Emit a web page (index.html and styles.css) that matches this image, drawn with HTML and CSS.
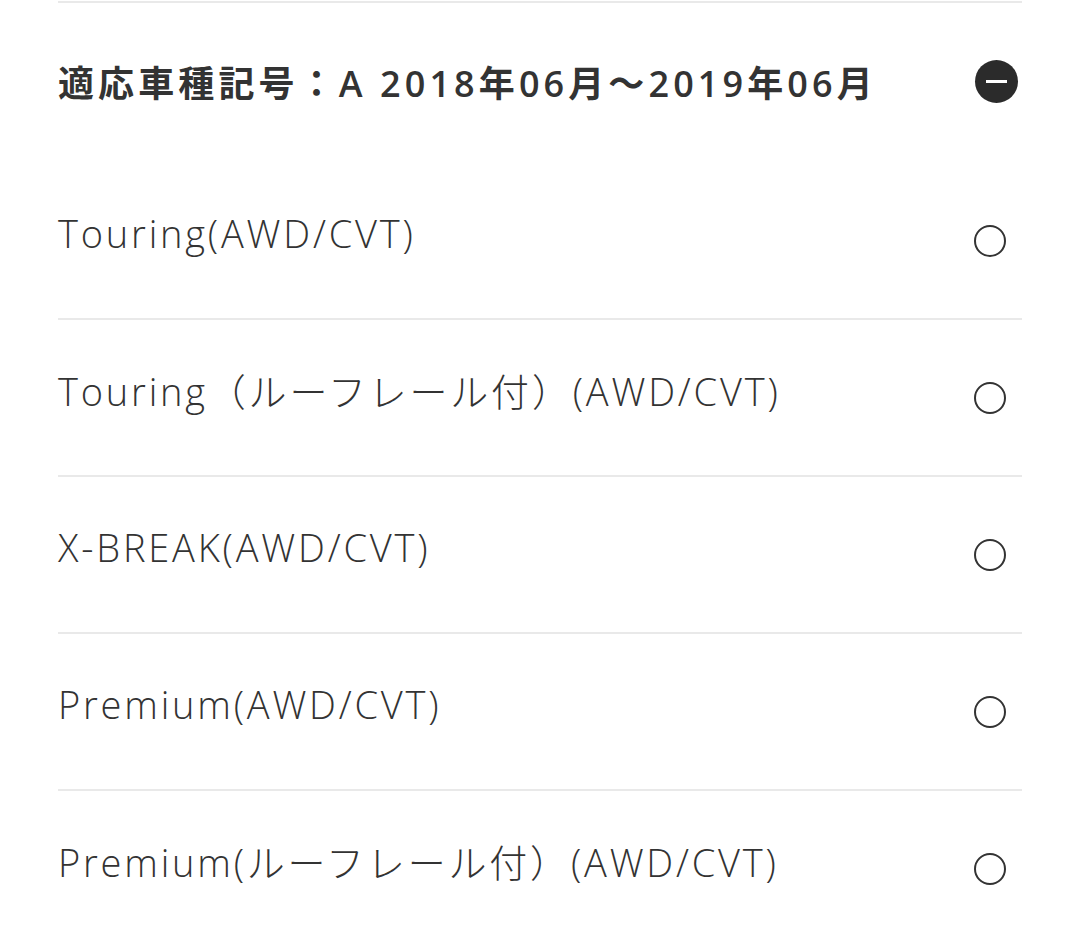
FILE: index.html
```html
<!DOCTYPE html>
<html lang="ja">
<head>
    <meta charset="UTF-8">
    <meta name="viewport" content="width=device-width, initial-scale=1.0">
    <title>適応車種</title>
    <link rel="stylesheet" href="styles.css">
</head>
<body>
    <div class="accordion">
        <div class="accordion-head">
            <div class="head-title">適応車種記号：A 2018年06月～2019年06月</div>
            <span class="toggle"></span>
        </div>
        <ul class="grade-list">
            <li class="grade"><span class="grade-name">Touring(AWD/CVT)</span><span class="radio"></span></li>
            <li class="grade"><span class="grade-name">Touring（ルーフレール付）(AWD/CVT)</span><span class="radio"></span></li>
            <li class="grade"><span class="grade-name">X-BREAK(AWD/CVT)</span><span class="radio"></span></li>
            <li class="grade"><span class="grade-name">Premium(AWD/CVT)</span><span class="radio"></span></li>
            <li class="grade"><span class="grade-name">Premium(ルーフレール付）(AWD/CVT)</span><span class="radio"></span></li>
        </ul>
    </div>
</body>
</html>
```

FILE: styles.css
```css
* {
    margin: 0;
    padding: 0;
    box-sizing: border-box;
}

body {
    background: #fff;
    color: #333;
    font-family: "Open Sans", "Noto Sans CJK JP", sans-serif;
    overflow: hidden;
}

.accordion {
    margin: 1px 58px 0 58px;
    border-top: 2px solid #e9e9e9;
}

.accordion-head {
    height: 160px;
    display: flex;
    align-items: center;
    justify-content: space-between;
    padding-bottom: 3px;
}

.head-title {
    font-size: 36px;
    font-weight: 600;
    letter-spacing: 4.1px;
    white-space: nowrap;
}

.toggle {
    width: 43px;
    height: 43px;
    border-radius: 50%;
    background: #2b2b2b;
    margin-right: 4px;
    position: relative;
}

.toggle::after {
    content: "";
    position: absolute;
    left: 11px;
    right: 11px;
    top: 20px;
    height: 3px;
    background: #fff;
}

.grade-list {
    list-style: none;
}

.grade {
    height: 157px;
    display: flex;
    align-items: center;
    justify-content: space-between;
    border-bottom: 2px solid #e9e9e9;
}

.grade-name {
    font-size: 38px;
    font-weight: 300;
    letter-spacing: 2.8px;
    margin-bottom: 16px;
    white-space: nowrap;
}

.radio {
    width: 32px;
    height: 32px;
    border: 2px solid #333;
    border-radius: 50%;
    margin-right: 16px;
}
```
